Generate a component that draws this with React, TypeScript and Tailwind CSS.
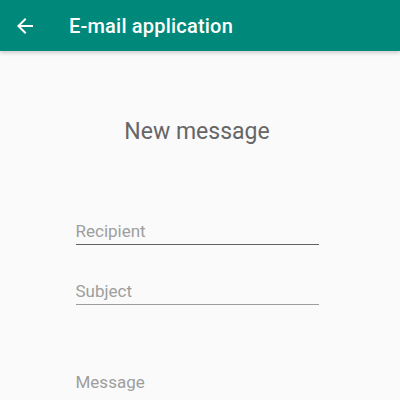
import React from "react";

const Field = ({ label, line }: { label: string; line: string }) => (
  <div className={`w-[243px] h-[27px] flex items-end pb-[3px] border-b ${line}`}>
    <span className="text-[17px] leading-[20px] text-[#9e9e9e]">{label}</span>
  </div>
);

export default function App() {
  return (
    <div className="w-[400px] h-[400px] overflow-hidden bg-[#fafafa] font-['Roboto',sans-serif]">
      <div className="h-[51px] bg-[#00897b] flex items-center shadow-[0_2px_4px_rgba(0,0,0,0.18)] relative z-10">
        <div className="w-[69px] pl-[13px] flex items-center">
          <svg width="24" height="24" viewBox="0 0 24 24" fill="#fff">
            <path d="M20 11H7.83l5.59-5.59L12 4l-8 8 8 8 1.41-1.41L7.83 13H20v-2z" />
          </svg>
        </div>
        <span className="text-white text-[20px] font-medium tracking-[0.2px]">E-mail application</span>
      </div>
      <div className="flex flex-col items-center">
        <div className="mt-[67px] ml-[-6px] text-[23px] leading-[28px] text-[#666]">New message</div>
        <div className="mt-[72px] ml-[-6px] flex flex-col gap-[33px]">
          <Field label="Recipient" line="border-[#616161]" />
          <Field label="Subject" line="border-[#9e9e9e]" />
        </div>
        <div className="mt-[67px] ml-[-6px] w-[243px] text-[17px] leading-[20px] text-[#9e9e9e]">Message</div>
      </div>
    </div>
  );
}
